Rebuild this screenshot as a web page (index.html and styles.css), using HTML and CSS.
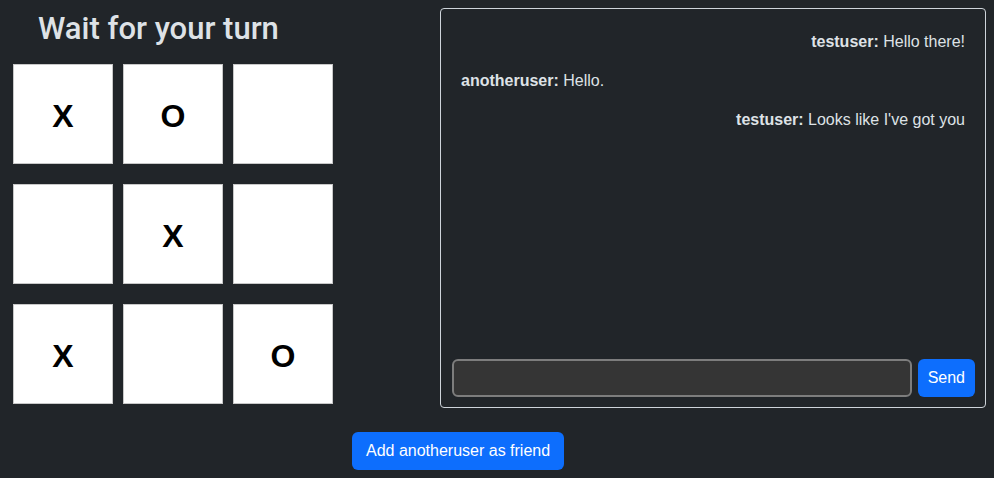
FILE: index.html
```html
<!DOCTYPE html>
<html lang="en">
<head>
<meta charset="utf-8">
<title>Tic Tac Toe</title>
<link rel="stylesheet" href="styles.css">
</head>
<body>
<div class="page">
  <div class="top">
    <div class="game">
      <h2 class="status">Wait for your turn</h2>
      <div class="board">
        <div class="cell">X</div>
        <div class="cell">O</div>
        <div class="cell"></div>
        <div class="cell"></div>
        <div class="cell">X</div>
        <div class="cell"></div>
        <div class="cell">X</div>
        <div class="cell"></div>
        <div class="cell">O</div>
      </div>
    </div>
    <div class="chat">
      <div class="messages">
        <p class="msg mine"><strong>testuser:</strong> Hello there!</p>
        <p class="msg"><strong>anotheruser:</strong> Hello.</p>
        <p class="msg mine"><strong>testuser:</strong> Looks like I've got you</p>
      </div>
      <form class="composer">
        <input class="chat-input" type="text">
        <button class="btn" type="button">Send</button>
      </form>
    </div>
  </div>
  <div class="actions">
    <button class="btn friend" type="button">Add anotheruser as friend</button>
  </div>
</div>
</body>
</html>
```
FILE: styles.css
```css
* { box-sizing: border-box; }
html, body { margin: 0; padding: 0; }
body {
  background: #212529;
  color: #dee2e6;
  font-family: "Liberation Sans", Arial, sans-serif;
  font-size: 16px;
  line-height: 1.5;
  width: 994px;
  height: 478px;
  overflow: hidden;
}
.page { display: flex; flex-direction: column; }
.top { display: flex; padding: 8px 0 0 13px; }
.game { width: 427px; }
.status {
  margin: 2px 0 17px 25px;
  font-family: Roboto, "Liberation Sans", sans-serif;
  font-size: 31px;
  font-weight: 500;
  line-height: 1.2;
  color: #dee2e6;
}
.board {
  display: grid;
  grid-template-columns: repeat(3, 100px);
  grid-auto-rows: 100px;
  column-gap: 10px;
  row-gap: 20px;
}
.cell {
  background: #fff;
  border: 1px solid #c8c8c8;
  color: #000;
  font-weight: 700;
  font-size: 32px;
  padding-top: 3px;
  display: flex;
  align-items: center;
  justify-content: center;
}
.chat {
  width: 546px;
  height: 400px;
  border: 1px solid #ced4da;
  border-radius: 4px;
  display: flex;
  flex-direction: column;
}
.messages { flex: 1; padding: 21px 20px 0; }
.msg { margin: 0 0 15px; }
.msg.mine { text-align: right; }
.composer { display: flex; gap: 6px; padding: 0 10px 10px 11px; }
.chat-input {
  flex: 1;
  height: 38px;
  background: #353535;
  border: 2px solid #7d7d7d;
  border-radius: 6px;
  color: #fff;
  font: inherit;
}
.btn {
  height: 38px;
  background: #0d6efd;
  color: #fff;
  border: none;
  border-radius: 6px;
  padding: 0 10px;
  font-family: inherit;
  font-size: 16px;
}
.actions { padding: 24px 0 0 352px; }
.friend { padding: 0 14px; }
```
